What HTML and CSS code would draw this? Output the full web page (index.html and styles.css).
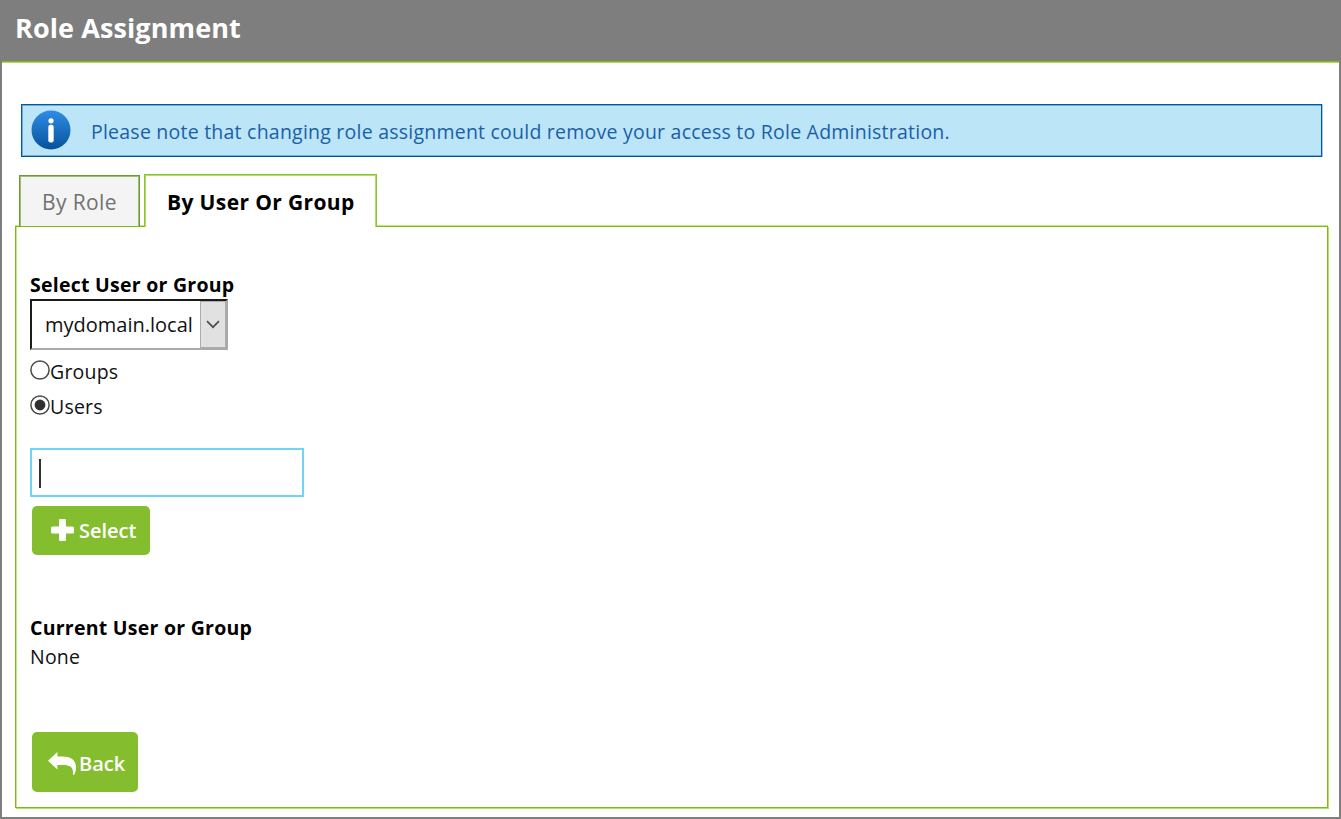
FILE: index.html
```html
<!DOCTYPE html>
<html lang="en">
<head>
<meta charset="utf-8">
<title>Role Assignment</title>
<link rel="stylesheet" href="styles.css">
</head>
<body>
<div class="window">
  <header class="titlebar"><h1 class="title">Role Assignment</h1></header>
  <main class="content">
    <div class="notice">
      <svg class="notice-icon" width="40" height="40" viewBox="0 0 40 40">
        <defs>
          <linearGradient id="orb" x1="0" y1="0" x2="0" y2="1">
            <stop offset="0" stop-color="#2f8ce6"/>
            <stop offset="1" stop-color="#07529a"/>
          </linearGradient>
        </defs>
        <circle cx="20" cy="20" r="19.5" fill="url(#orb)"/>
        <circle cx="20" cy="10.8" r="2.6" fill="#fff"/>
        <rect x="17.3" y="14.8" width="5.4" height="17.6" rx="2.2" fill="#fff"/>
      </svg>
      <span class="notice-text">Please note that changing role assignment could remove your access to Role Administration.</span>
    </div>
    <nav class="tabs">
      <a class="tab">By Role</a>
      <a class="tab tab-active">By User Or Group</a>
    </nav>
    <section class="panel">
      <h2 class="label">Select User or Group</h2>
      <div class="select">
        <span class="select-value">mydomain.local</span>
        <span class="select-button">
          <svg width="14" height="9" viewBox="0 0 14 9"><path d="M1 1.2 7 7.2 13 1.2" fill="none" stroke="#505050" stroke-width="1.7"/></svg>
        </span>
      </div>
      <div class="option">
        <svg class="radio" width="20" height="20" viewBox="0 0 20 20"><circle cx="10" cy="10" r="9.1" fill="#fff" stroke="#4a4a4a" stroke-width="1.5"/></svg>
        <span class="option-text">Groups</span>
      </div>
      <div class="option">
        <svg class="radio" width="20" height="20" viewBox="0 0 20 20"><circle cx="10" cy="10" r="9.1" fill="#fff" stroke="#4a4a4a" stroke-width="1.5"/><circle cx="10" cy="10" r="5.4" fill="#303030"/></svg>
        <span class="option-text">Users</span>
      </div>
      <div class="field"><span class="caret"></span></div>
      <button class="button button-select">
        <svg width="23" height="22" viewBox="0 0 23 22"><path d="M9 0h5q1 0 1 1v6.500h6.500q1.500 0 1.500 1.500v4q0 1.500-1.500 1.500H15V21q0 1-1 1H9q-1 0-1-1v-6.500H1.500Q0 14.500 0 13V9q0-1.500 1.500-1.500H8V1q0-1 1-1z" fill="#fff"/></svg>
        <span class="select-caption">Select</span>
      </button>
      <h2 class="label label-current">Current User or Group</h2>
      <p class="current">None</p>
      <button class="button button-back">
        <svg width="28" height="23" viewBox="0 0 28 23"><path d="M0 8.700 9.400 0v4.500H15C24 4.500 28 9 28 16c0 3-.8 5-2.200 7-.6 0-.9-.2-.8-.8C25.500 15.500 22.500 13 15 13H9.400v4.500z" fill="#fff"/></svg>
        <span class="back-caption">Back</span>
      </button>
    </section>
  </main>
</div>
</body>
</html>
```
FILE: styles.css
```css
* { box-sizing: border-box; }
body {
  margin: 0;
  font-family: "Open Sans", "Noto Sans", sans-serif;
  font-size: 19.5px;
  color: #111;
  background: #fff;
}
.window {
  width: 1341px;
  height: 819px;
  border: 2px solid #7e7e7e;
  border-top: 0;
  background: #fff;
}
.titlebar {
  height: 62px;
  padding: 8px 13px 0;
  background: #7e7e7e;
  border-bottom: 1px solid #86b81c;
  box-shadow: 0 1px 0 #b2da50;
}
.title {
  margin: 0;
  color: #fff;
  font-size: 27px;
  line-height: 40px;
  font-weight: 700;
  letter-spacing: .1px;
}
.content { padding: 42px 10px 0 13px; }
.notice {
  display: flex;
  align-items: center;
  width: 1301px;
  height: 53px;
  margin-left: 6px;
  padding: 0 9px;
  background: #bce5f7;
  border: 1px solid #0058a3;
  box-shadow: inset 1px 1px 0 #70aed8, inset 0 -1px 0 #70aed8, 1px 0 0 #a9c9e4;
}
.notice-icon { flex: none; margin-top: -1px; }
.notice-text {
  margin-left: 20px;
  padding-top: 1px;
  color: #1a5fa8;
  font-size: 19.5px;
  letter-spacing: .23px;
  white-space: nowrap;
}
.tabs {
  display: flex;
  align-items: flex-start;
  gap: 4px;
  height: 54px;
  margin-top: 17px;
  padding-left: 4px;
}
.tab {
  width: 121px;
  height: 51px;
  margin-top: 1px;
  padding-left: 22px;
  line-height: 53px;
  font-size: 21px;
  letter-spacing: .37px;
  color: #717171;
  background: #f4f4f4;
  border: 1px solid #6a9c30;
  border-bottom: 0;
  box-shadow: inset 1px 1px 0 #9dbd77, inset -1px 0 0 #9dbd77;
  white-space: nowrap;
}
.tab-active {
  width: 233px;
  height: 53px;
  margin-top: 0;
  line-height: 54px;
  font-weight: 700;
  color: #000;
  background: #fff;
  border-color: #8cc52a;
  box-shadow: inset 1px 1px 0 #b4da74, inset -1px 0 0 #b4da74;
  z-index: 1;
}
.panel {
  width: 1313px;
  height: 582px;
  margin-top: -2px;
  padding: 44px 14px 0;
  border: 1px solid #81b913;
  box-shadow: 1px 1px 0 #b4df66, 0 -1px 0 #c5e68a, inset 1px 0 0 #c5e68a;
}
.label {
  margin: 0;
  font-size: 19.5px;
  line-height: 28px;
  font-weight: 700;
  letter-spacing: .25px;
  color: #000;
}
.select {
  display: flex;
  width: 198px;
  height: 51px;
  border: 2px solid #1c1c1c;
  border-right-color: #aaa;
  border-bottom-color: #aaa;
}
.select-value { flex: 1; padding-left: 13px; line-height: 47px; font-size: 20px; }
.select-button {
  display: flex;
  align-items: center;
  justify-content: center;
  width: 26px;
  background: #e1e1e1;
  border: 1px solid #adadad;
}
.option { display: flex; height: 35px; align-items: flex-start; }
.radio { margin-top: 10px; flex: none; }
.option-text { line-height: 44px; letter-spacing: .2px; }
.field {
  width: 274px;
  height: 49px;
  margin-top: 28px;
  padding: 9px 7px;
  border: 2px solid #70d5f5;
}
.caret { display: block; width: 2px; height: 29px; background: #333; }
.button {
  display: flex;
  align-items: center;
  margin-left: 2px;
  border: 0;
  border-radius: 5px;
  background: #84be2f;
  color: #fff;
  font: 600 20px "Open Sans", "Noto Sans", sans-serif;
}
.button-select { width: 118px; height: 49px; margin-top: 9px; padding: 0 0 1px 19px; gap: 5px; }
.label-current { margin-top: 59px; }
.current { margin: 0; line-height: 30px; letter-spacing: .2px; }
.button-back { width: 106px; height: 60px; margin-top: 60px; padding: 0 0 0 16px; gap: 3px; }
.button-back svg { margin-top: 3px; }
.back-caption { margin-top: 2px; }
```
